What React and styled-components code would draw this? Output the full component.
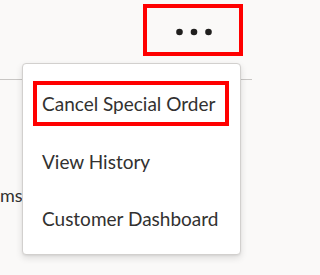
import React from "react";
import styled, { createGlobalStyle } from "styled-components";

const GlobalStyle = createGlobalStyle`
  html, body { margin: 0; padding: 0; background: #faf9f8; }
  body { font-family: "Lato", "Open Sans", sans-serif; }
`;

const Page = styled.div`
  position: relative;
  width: 252px;
  height: 275px;
  overflow: hidden;
  background: #faf9f8;
`;

const Header = styled.div`
  height: 79px;
  border-bottom: 1px solid #c8c6c4;
  display: flex;
  justify-content: flex-end;
  align-items: flex-start;
  padding-right: 9px;
  box-sizing: content-box;
`;

const MoreButton = styled.button`
  margin-top: 4px;
  width: 100px;
  height: 52px;
  box-sizing: border-box;
  border: 4px solid #ff0000;
  background: #faf9f8;
  display: flex;
  align-items: center;
  justify-content: center;
  padding: 4px 0 0 1px;
  cursor: pointer;
`;

const Body = styled.div`
  padding-top: 103px;
  font-size: 18px;
  line-height: 24px;
  color: #323130;
  white-space: nowrap;
`;

const Menu = styled.div`
  position: absolute;
  left: 22px;
  top: 63px;
  width: 219px;
  height: 192px;
  box-sizing: border-box;
  background: #ffffff;
  border: 1px solid #d2d0ce;
  border-radius: 4px;
  box-shadow: 0 3px 7px rgba(0, 0, 0, 0.12), 0 1px 2px rgba(0, 0, 0, 0.06);
  padding: 17px 0 0 10px;
  display: flex;
  flex-direction: column;
  gap: 12.7px;
`;

const MenuItem = styled.div`
  width: 196px;
  height: 45px;
  box-sizing: border-box;
  border: 4px solid ${(p) => (p.focused ? "#ff0000" : "transparent")};
  display: flex;
  align-items: center;
  padding-left: 5px;
  font-size: 19px;
  color: #323130;
  white-space: nowrap;
`;

const MoreIcon = () => (
  <svg width="36" height="8" viewBox="0 0 36 8">
    <circle cx="3.5" cy="4" r="3.3" fill="#201f1e" />
    <circle cx="18" cy="4" r="3.3" fill="#201f1e" />
    <circle cx="32.5" cy="4" r="3.3" fill="#201f1e" />
  </svg>
);

export default function App() {
  return (
    <>
      <GlobalStyle />
      <Page>
        <Header>
          <MoreButton aria-label="More options">
            <MoreIcon />
          </MoreButton>
        </Header>
        <Body>ms</Body>
        <Menu role="menu">
          <MenuItem focused>Cancel Special Order</MenuItem>
          <MenuItem>View History</MenuItem>
          <MenuItem>Customer Dashboard</MenuItem>
        </Menu>
      </Page>
    </>
  );
}
